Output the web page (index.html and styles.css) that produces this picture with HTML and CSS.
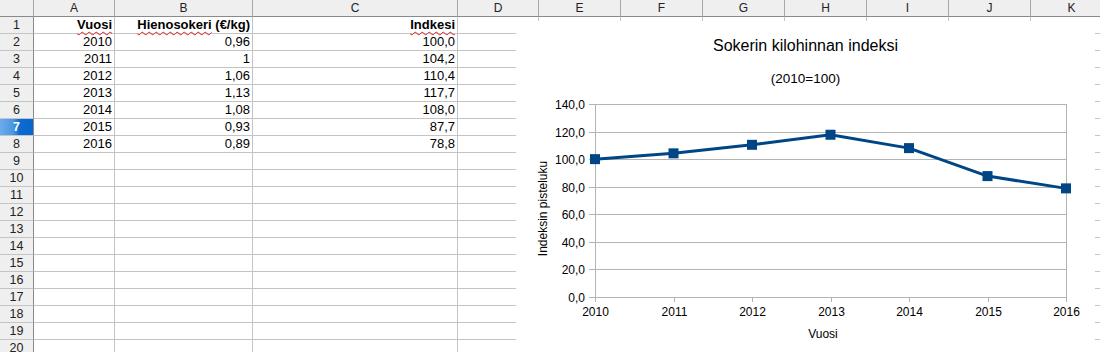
FILE: index.html
```html
<!DOCTYPE html>
<html lang="fi">

<head>
    <meta charset="UTF-8">
    <title>Sokerin kilohinnan indeksi</title>
    <link rel="stylesheet" href="styles.css">
</head>

<body>
    <div class="sheet" id="sheet"></div>

    <div class="chart">
        <svg class="chart-svg" width="579" height="331" viewBox="0 0 579 331">
            <text class="chart-title" x="289.5" y="30">Sokerin kilohinnan indeksi</text>
            <text class="chart-subtitle" x="289.5" y="62">(2010=100)</text>

            <g id="grid"></g>
            <g id="labels"></g>

            <text class="axis-title" x="307" y="317">Vuosi</text>
            <text class="axis-title" transform="translate(30.5,187.5) rotate(-90)">Indeksin pisteluku</text>

            <polyline id="line" class="series-line" points=""></polyline>
            <g id="markers"></g>
        </svg>
    </div>

    <script>
        const columns = ["A", "B", "C", "D", "E", "F", "G", "H", "I", "J", "K"];
        const rowCount = 20;
        const selectedRow = 7;

        // first row is the heading row
        const data = [
            ["Vuosi", "Hienosokeri (€/kg)", "Indkesi"],
            ["2010", "0,96", "100,0"],
            ["2011", "1", "104,2"],
            ["2012", "1,06", "110,4"],
            ["2013", "1,13", "117,7"],
            ["2014", "1,08", "108,0"],
            ["2015", "0,93", "87,7"],
            ["2016", "0,89", "78,8"]
        ];

        const headings = ['<span class="typo">Vuosi</span>', '<span class="typo">Hienosokeri</span> (€/kg)', '<span class="typo">Indkesi</span>'];

        function buildSheet()
        {
            const sheet = document.getElementById("sheet");

            const corner = document.createElement("div");
            corner.className = "col-head corner";
            sheet.appendChild(corner);

            for(let c = 0; c < columns.length; c++)
            {
                const head = document.createElement("div");
                head.className = "col-head";
                head.innerText = columns[c];
                sheet.appendChild(head);
            }

            for(let r = 1; r <= rowCount; r++)
            {
                const rowHead = document.createElement("div");
                rowHead.className = r == selectedRow ? "row-head selected" : "row-head";
                rowHead.innerText = r;
                sheet.appendChild(rowHead);

                for(let c = 0; c < columns.length; c++)
                {
                    const cell = document.createElement("div");
                    cell.className = "cell";

                    if(r == 1 && c < 3)
                    {
                        cell.className = "cell bold";
                        cell.innerHTML = headings[c];
                    }
                    else if(data[r - 1] && data[r - 1][c])
                    {
                        cell.innerText = data[r - 1][c];
                    }

                    sheet.appendChild(cell);
                }
            }
        }

        const years = [2010, 2011, 2012, 2013, 2014, 2015, 2016];
        const values = [100, 104.2, 110.4, 117.7, 108.0, 87.7, 78.8];

        const plot = {left: 79, right: 550, bottom: 276, top: 83, max: 140};

        function xFor(i)
        {
            return plot.left + i * (plot.right - plot.left) / (years.length - 1);
        }

        function yFor(v)
        {
            return plot.bottom - v * (plot.bottom - plot.top) / plot.max;
        }

        function svgEl(name, attrs)
        {
            const el = document.createElementNS("http://www.w3.org/2000/svg", name);
            for(const key in attrs)
            {
                el.setAttribute(key, attrs[key]);
            }
            return el;
        }

        function buildChart()
        {
            const grid = document.getElementById("grid");
            const labels = document.getElementById("labels");

            for(let v = 0; v <= plot.max; v += 20)
            {
                const y = Math.round(yFor(v)) + 0.5;
                grid.appendChild(svgEl("line", {x1: plot.left - 6, x2: plot.right + 0.5, y1: y, y2: y, class: "grid-line"}));

                const label = svgEl("text", {x: 69, y: y + 4.5, class: "y-label"});
                label.textContent = v.toFixed(1).replace(".", ",");
                labels.appendChild(label);
            }

            for(let i = 0; i < years.length; i++)
            {
                const x = Math.round(xFor(i)) + 0.5;
                grid.appendChild(svgEl("line", {x1: x, x2: x, y1: plot.bottom, y2: plot.bottom + 5, class: "grid-line"}));

                const label = svgEl("text", {x: x, y: 295, class: "x-label"});
                label.textContent = years[i];
                labels.appendChild(label);
            }

            grid.appendChild(svgEl("line", {x1: plot.left + 0.5, x2: plot.left + 0.5, y1: plot.top, y2: plot.bottom + 5, class: "grid-line"}));
            grid.appendChild(svgEl("line", {x1: plot.right + 0.5, x2: plot.right + 0.5, y1: plot.top, y2: plot.bottom + 5, class: "grid-line"}));

            const points = [];
            const markers = document.getElementById("markers");

            for(let i = 0; i < values.length; i++)
            {
                const x = xFor(i);
                const y = yFor(values[i]);
                points.push(x + "," + y);
                markers.appendChild(svgEl("rect", {x: x - 5, y: y - 5, width: 10, height: 10, class: "marker"}));
            }

            document.getElementById("line").setAttribute("points", points.join(" "));
        }

        buildSheet();
        buildChart();
    </script>
</body>

</html>
```

FILE: styles.css
```css
body {
    margin: 0;
    background-color: white;
    overflow: hidden;
    font-family: "Liberation Sans", Arial, sans-serif;
}

.sheet {
    display: grid;
    grid-template-columns: 34px 81px 138px 205px 81px repeat(7, 82px);
    grid-auto-rows: 17px;
    width: 1112px;
}

.col-head,
.row-head {
    box-sizing: border-box;
    background-color: #efefef;
    color: #222;
    font-size: 12px;
    line-height: 16px;
    text-align: center;
    border-right: 1px solid #a8a8a8;
}

.col-head {
    border-bottom: 1px solid #8a8a8a;
}

.row-head {
    border-bottom: 1px solid #c4c4c4;
    border-right-color: #8a8a8a;
    font-size: 12.5px;
}

.row-head.selected {
    background: linear-gradient(to right, #6cabec 0, #4c96e2 40%, #0b6bd0 60%, #0966cc 100%);
    color: white;
    font-weight: bold;
}

.cell {
    box-sizing: border-box;
    border-right: 1px solid #c4c4c4;
    border-bottom: 1px solid #c4c4c4;
    padding-right: 2px;
    font-size: 13px;
    line-height: 16px;
    text-align: right;
    white-space: nowrap;
    color: black;
}

.cell.bold {
    font-weight: bold;
}

.typo {
    text-decoration: underline wavy #e02020;
    text-decoration-thickness: 1px;
    text-underline-offset: 2px;
}

/* chart object lies over the grid */
.chart {
    position: absolute;
    left: 516px;
    top: 21px;
    width: 579px;
    height: 340px;
    background-color: white;
}

.chart-svg {
    display: block;
    font-family: "Liberation Sans", Arial, sans-serif;
}

.chart-title {
    font-size: 16px;
    text-anchor: middle;
    fill: black;
}

.chart-subtitle {
    font-size: 13.5px;
    text-anchor: middle;
    fill: black;
}

.axis-title {
    font-size: 12px;
    text-anchor: middle;
    fill: black;
}

.y-label {
    font-size: 12px;
    text-anchor: end;
    fill: black;
}

.x-label {
    font-size: 12px;
    text-anchor: middle;
    fill: black;
}

.grid-line {
    stroke: #b3b3b3;
    stroke-width: 1;
}

.series-line {
    fill: none;
    stroke: #004586;
    stroke-width: 3;
    stroke-linejoin: round;
}

.marker {
    fill: #004586;
}
```
